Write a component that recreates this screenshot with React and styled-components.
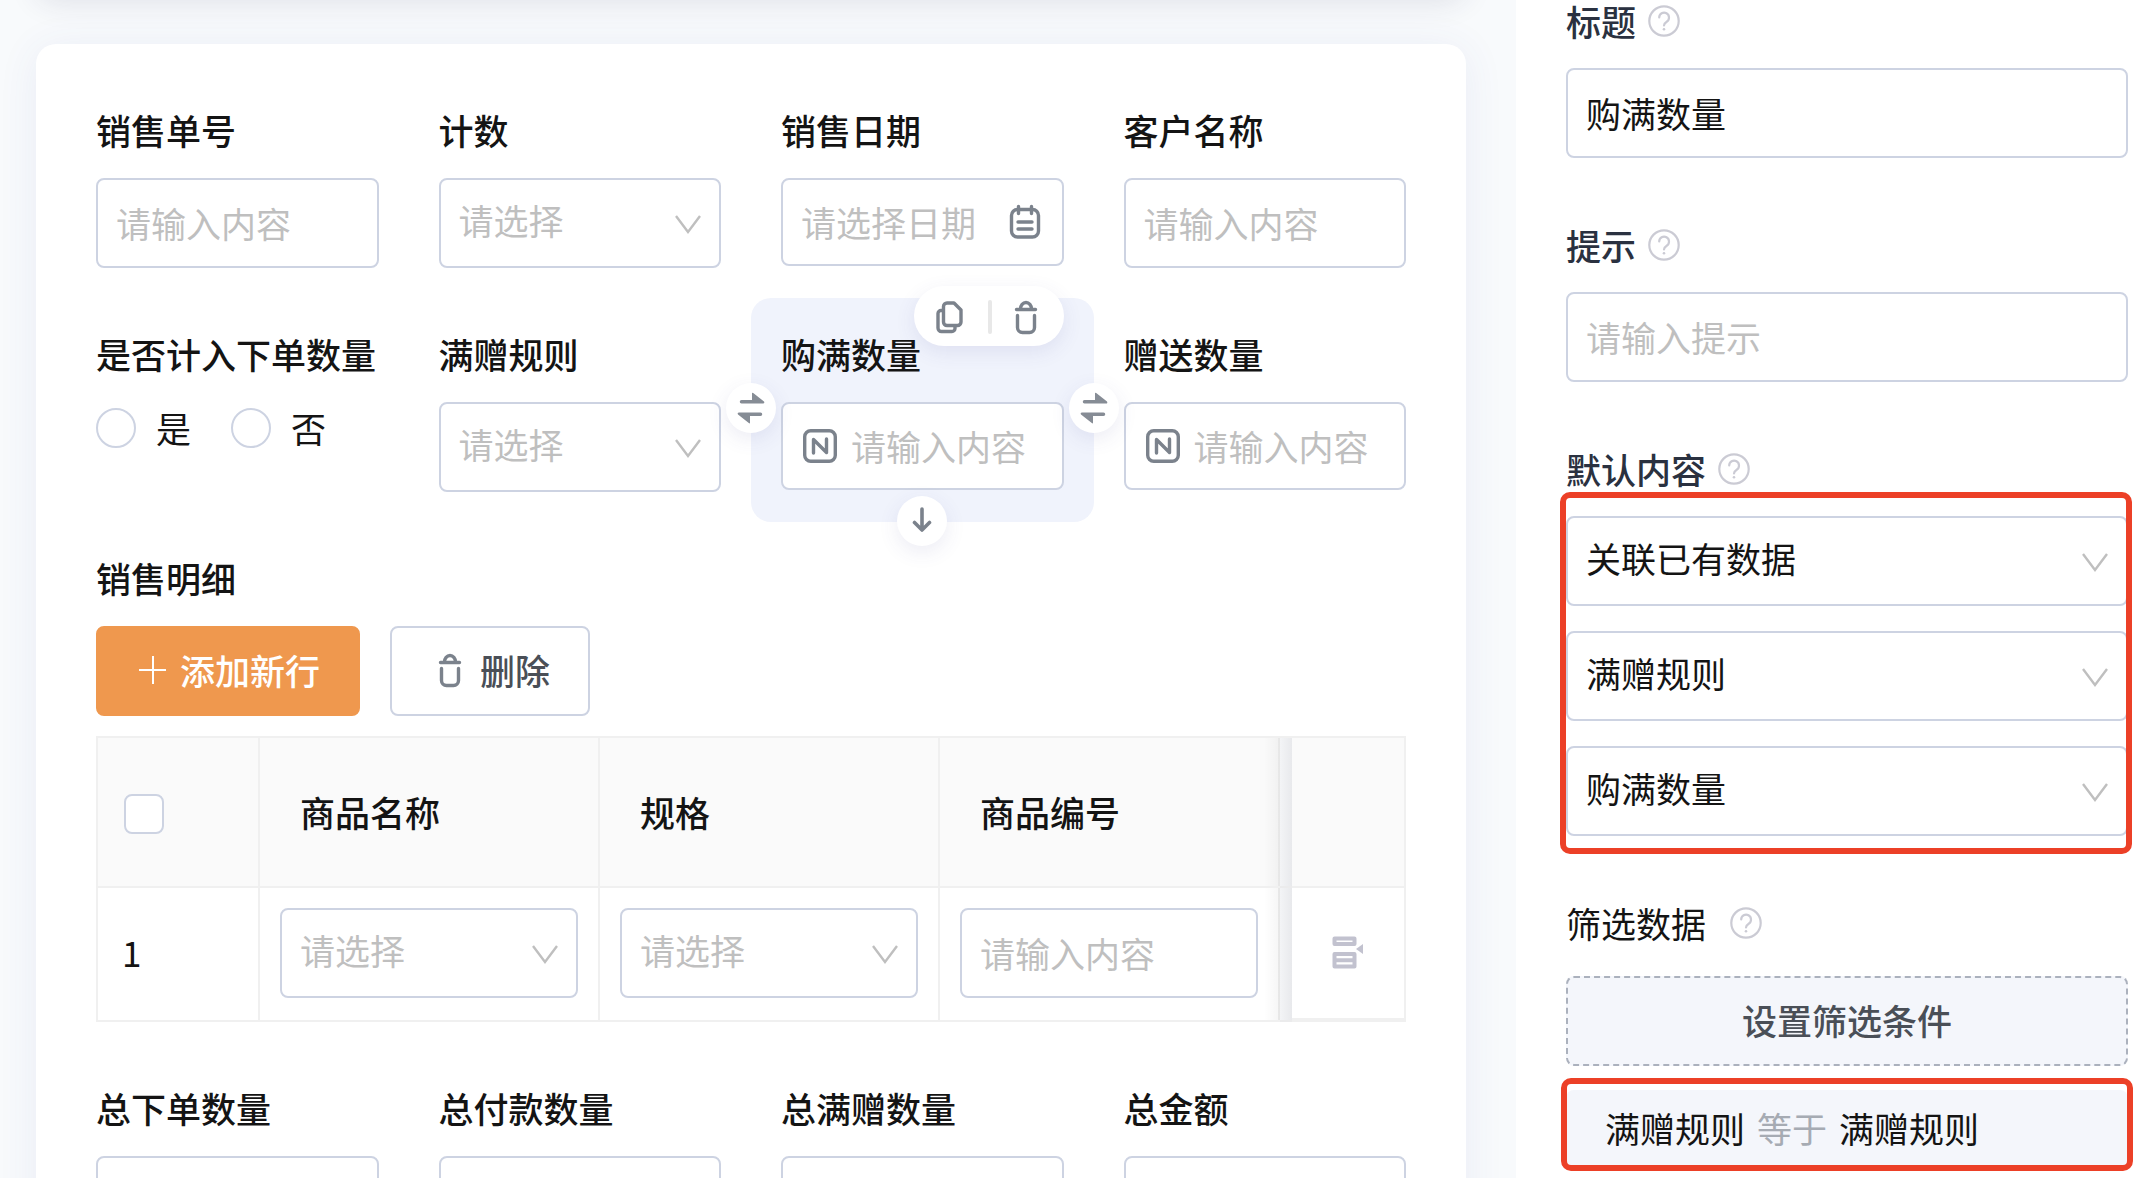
import React, { useId, useState } from "react";
import styled, { createGlobalStyle } from "styled-components";

const GlobalStyle = createGlobalStyle`
    * {
        box-sizing: border-box;
    }

    body {
        margin: 0;
        background: #fff;
        color: #141414;
        font-family: "Noto Sans CJK SC", "Noto Sans", sans-serif;
        font-size: 35px;
        line-height: 44px;
    }

    input,
    select,
    button {
        margin: 0;
        color: inherit;
        font: inherit;
    }
`;

const Page = styled.div`
    display: flex;
    height: 100vh;
    overflow: hidden;
`;

const Designer = styled.main`
    flex: 1;
    min-width: 0;
    padding: 0 50px 0 36px;
    background: #f8fafc;
    overflow: hidden;
`;

// Bottom edge of the toolbar that is scrolled out of view
const ToolbarCard = styled.div`
    height: 80px;
    margin-top: -82px;
    margin-bottom: 46px;
    border-radius: 20px;
    background: #fff;
    box-shadow: 0 4px 30px rgba(40, 40, 80, 0.12);
`;

const FormCard = styled.div`
    padding: 30px;
    border-radius: 20px;
    background: #fff;
    box-shadow: 0 4px 40px rgba(60, 80, 160, 0.08);
`;

const FieldGrid = styled.div`
    display: grid;
    grid-template-columns: repeat(4, minmax(0, 1fr));
`;

const Cell = styled.div`
    position: relative;
    min-height: 224px;
    padding: 30px;
    border-radius: 20px;
    background: ${(props) => (props.$active ? "#f0f3fc" : "transparent")};
`;

const CellLabel = styled.label`
    display: block;
    margin-bottom: 22px;
    font-weight: 500;
    line-height: 52px;
    white-space: nowrap;
`;

const CellTitle = styled.h2`
    margin: 0 0 22px;
    font-size: 35px;
    font-weight: 500;
    line-height: 52px;
`;

const InputBox = styled.div`
    display: flex;
    align-items: center;
    gap: 12px;
    height: ${(props) => (props.$short ? "88px" : "90px")};
    padding: 0 18px;
    border: 2px solid #cdd3e2;
    border-radius: 8px;
    background: #fff;

    svg {
        flex: none;
        margin: 0 2px;
    }
`;

const TextInput = styled.input`
    flex: 1;
    min-width: 0;
    width: 100%;
    height: 100%;
    padding: 0 0 2px;
    border: none;
    outline: none;
    background: transparent;

    &::placeholder {
        color: #bfbfbf;
        opacity: 1;
    }
`;

const SelectBox = styled.div`
    display: grid;
    grid-template-columns: minmax(0, 1fr);
    align-items: center;

    > * {
        grid-area: 1 / 1;
    }

    svg {
        justify-self: end;
        margin-right: 18px;
        pointer-events: none;
    }
`;

const Select = styled.select`
    width: 100%;
    height: 90px;
    padding: 0 50px 6px 18px;
    border: 2px solid #cdd3e2;
    border-radius: 8px;
    outline: none;
    appearance: none;
    background: #fff;
    color: ${(props) => (props.$empty ? "#bfbfbf" : "#141414")};
`;

const RadioRow = styled.div`
    display: flex;
    gap: 40px;
`;

const RadioLabel = styled.label`
    display: flex;
    align-items: center;
    gap: 20px;
    height: 52px;
`;

const Radio = styled.input`
    width: 40px;
    height: 40px;
    border: 2px solid #cdd3e2;
    border-radius: 50%;
    appearance: none;
    background: #fff;

    &:checked {
        border: 12px solid #ef984e;
    }
`;

const Checkbox = styled.input`
    display: block;
    width: 40px;
    height: 40px;
    margin-top: 4px;
    border: 2px solid #cdd3e2;
    border-radius: 8px;
    appearance: none;
    background: #fff;

    &:checked {
        background: #ef984e;
    }
`;

const FloatTools = styled.div`
    position: absolute;
    top: -12px;
    right: 30px;
    z-index: 2;
    display: flex;
    align-items: center;
    gap: 22px;
    width: 150px;
    height: 60px;
    padding: 2px 20px 0;
    border-radius: 30px;
    background: #fff;
    box-shadow: 0 6px 20px rgba(70, 70, 150, 0.1);
`;

const ToolDivider = styled.span`
    width: 4px;
    height: 34px;
    border-radius: 2px;
    background: #e8e8e8;
`;

const IconButton = styled.button`
    display: flex;
    padding: 0;
    border: none;
    background: none;
    cursor: pointer;
`;

const RoundButton = styled.button`
    position: absolute;
    z-index: 2;
    display: flex;
    align-items: center;
    justify-content: center;
    width: 50px;
    height: 50px;
    padding: 0;
    border: none;
    border-radius: 50%;
    background: #fff;
    box-shadow: 0 6px 20px rgba(70, 70, 150, 0.1);
    cursor: pointer;
    ${(props) => props.$side === "left" && "left: -25px; top: 85px;"}
    ${(props) => props.$side === "right" && "right: -25px; top: 85px;"}
    ${(props) =>
        props.$side === "bottom" && "left: calc(50% - 25px); bottom: -24px;"}
`;

const Detail = styled.section`
    padding: 30px;
`;

const ButtonRow = styled.div`
    display: flex;
    gap: 30px;
    margin-bottom: 20px;
`;

const Button = styled.button`
    display: flex;
    align-items: center;
    gap: ${(props) => (props.$primary ? "14px" : "18px")};
    height: 90px;
    padding: 0 38px 2px ${(props) => (props.$primary ? "40px" : "46px")};
    border: 2px solid ${(props) => (props.$primary ? "#ef984e" : "#cdd3e2")};
    border-radius: 8px;
    background: ${(props) => (props.$primary ? "#ef984e" : "#fff")};
    color: ${(props) => (props.$primary ? "#fff" : "#4a4f57")};
    font-weight: 500;
    cursor: pointer;
`;

const Table = styled.table`
    width: 100%;
    border-top: 2px solid #f0f0f0;
    border-left: 2px solid #f0f0f0;
    border-collapse: separate;
    border-spacing: 0;
    table-layout: fixed;
`;

const Th = styled.th`
    height: 150px;
    padding: 0 ${(props) => (props.$check ? "26px" : "40px")};
    border-right: 2px solid #f0f0f0;
    border-bottom: 2px solid #f0f0f0;
    background: #fafafa;
    font-weight: 500;
    text-align: left;
`;

const Td = styled.td`
    height: 134px;
    padding: ${(props) => (props.$text ? "0 24px 4px" : "20px 20px 22px")};
    border-right: 2px solid #f0f0f0;
    border-bottom: ${(props) => (props.$last ? "4px" : "2px")} solid #f0f0f0;
`;

// Shadow cast by the fixed last column
const Gutter = styled.td`
    position: relative;
    padding: 0;
    border-bottom: 2px solid #ebebec;
    background: linear-gradient(to right, #f3f4f6, #e8e9ec);

    &::before {
        content: "";
        position: absolute;
        top: 0;
        bottom: 0;
        right: 100%;
        width: 16px;
        background: linear-gradient(
            to right,
            rgba(0, 0, 0, 0),
            rgba(0, 0, 0, 0.04)
        );
    }
`;

const Col = styled.col`
    width: ${(props) => props.$width || "auto"};
`;

const InsertCell = styled.div`
    display: flex;
    justify-content: center;
`;

const Settings = styled.aside`
    flex: none;
    width: 622px;
    padding: 0 10px 0 50px;
    background: #fff;
`;

const Setting = styled.section`
    margin-bottom: 66px;
`;

const SettingHead = styled.div`
    display: flex;
    align-items: center;
    gap: ${(props) => (props.$plain ? "24px" : "12px")};
    margin-bottom: ${(props) => (props.$plain ? "32px" : "26px")};
    color: ${(props) => (props.$plain ? "#141414" : "#2a3140")};
    font-weight: ${(props) => (props.$plain ? 400 : 500)};
    line-height: 42px;
`;

const Marked = styled.div`
    position: relative;
    display: flex;
    flex-direction: column;
    gap: 25px;

    &::after {
        content: "";
        position: absolute;
        inset: ${(props) => props.$inset};
        border: 6px solid #ec4027;
        border-radius: 10px;
        pointer-events: none;
    }
`;

const FilterButton = styled.button`
    display: block;
    width: 100%;
    height: 90px;
    margin-bottom: 24px;
    padding: 0 0 2px;
    border: 2px dashed #abb1bd;
    border-radius: 8px;
    background: #f4f6fb;
    color: #4a4f57;
    font-weight: 500;
    cursor: pointer;
`;

const Condition = styled.div`
    display: flex;
    align-items: center;
    gap: 12px;
    height: 80px;
    padding: 0 39px 4px;
    border-radius: 8px;
    background: #f4f6fb;
`;

const Operator = styled.span`
    color: #a6abb3;
`;

const ChevronIcon = () => (
    <svg width="30" height="30" viewBox="0 0 30 30" fill="none">
        <path d="M3 8 15 24 27 8" stroke="#bfbfbf" strokeWidth="2.4" />
    </svg>
);

const CalendarIcon = () => (
    <svg
        width="34"
        height="36"
        viewBox="0 0 34 36"
        fill="none"
        stroke="#7b828c"
        strokeWidth="3.4"
        strokeLinecap="round"
    >
        <rect x="3.5" y="5.5" width="27" height="27.5" rx="6" />
        <path d="M10.5 2.5v7M23.5 2.5v7M10 18h14M10 25h14" />
    </svg>
);

const NumberIcon = () => (
    <svg
        width="34"
        height="34"
        viewBox="0 0 34 34"
        fill="none"
        stroke="#7b828c"
        strokeWidth="3.4"
        strokeLinecap="round"
        strokeLinejoin="round"
    >
        <rect x="1.7" y="1.7" width="30.6" height="30.6" rx="6" />
        <path d="M10.5 24V10.5L23.5 23.5V10" />
    </svg>
);

const CopyIcon = () => (
    <svg
        width="32"
        height="36"
        viewBox="0 0 32 36"
        fill="none"
        stroke="#7b828c"
        strokeWidth="3.4"
        strokeLinejoin="round"
    >
        <path d="M13 4h7l7 7v12a3.500 3.500 0 0 1-3.500 3.500H13A3.500 3.500 0 0 1 9.500 23V7.500A3.500 3.500 0 0 1 13 4Z" />
        <path d="M9.500 11.500H7a3 3 0 0 0-3 3v14.500a3.500 3.500 0 0 0 3.500 3.500H18a3 3 0 0 0 3-3v-3" />
    </svg>
);

const TrashIcon = () => (
    <svg
        width="24"
        height="36"
        viewBox="0 0 24 36"
        fill="none"
        stroke="#7b828c"
        strokeWidth="3.4"
        strokeLinecap="round"
    >
        <path d="M2.500 10.500h19M6.500 10a5.500 6.500 0 0 1 11 0" />
        <path d="M3.500 16.500v12a5 5 0 0 0 5 5h7a5 5 0 0 0 5-5v-12" />
    </svg>
);

const SwapIcon = () => (
    <svg width="28" height="32" viewBox="0 0 28 32" fill="#868c95">
        <path d="M4.500 8H15V1.500Q15 .2 16.200 1L27 9.500Q28 11.500 26 11.500H4.500a1.750 1.750 0 0 1 0-3.500Z" />
        <path d="M23.500 24H13v6.500Q13 32 11.800 31L1 22.500Q0 20.500 2 20.500h21.500a1.750 1.750 0 0 1 0 3.500Z" />
    </svg>
);

const DownIcon = () => (
    <svg
        width="22"
        height="28"
        viewBox="0 0 22 28"
        fill="none"
        stroke="#7b828c"
        strokeWidth="3.6"
        strokeLinecap="round"
        strokeLinejoin="round"
    >
        <path d="M11 2v20M3.500 15.500 11 23l7.500-7.500" />
    </svg>
);

const PlusIcon = () => (
    <svg width="28" height="28" viewBox="0 0 28 28" fill="none">
        <path d="M15 0v28M1 14h27" stroke="#fff" strokeWidth="2" />
    </svg>
);

const InsertRowIcon = () => (
    <svg
        width="32"
        height="34"
        viewBox="0 0 32 34"
        fill="none"
        stroke="#c2c2cf"
        strokeWidth="4"
        strokeLinejoin="round"
    >
        <path d="M2.500 3.500h20v5.500h-20zM2.500 19h20v12.500h-20zM3 25.200h19" />
        <path d="M31 9v10l-7-5z" fill="#c2c2cf" stroke="none" />
    </svg>
);

const HelpIcon = () => (
    <svg
        width="32"
        height="32"
        viewBox="0 0 32 32"
        fill="none"
        stroke="#cbcbd4"
        strokeWidth="2.2"
        strokeLinecap="round"
    >
        <circle cx="16" cy="16" r="14.700" />
        <path d="M11.200 12.500a4.900 4.900 0 1 1 7.500 4.200c-1.700 1.100-2.700 2-2.700 3.800" />
        <circle cx="16" cy="24.200" r="1.300" fill="#cbcbd4" stroke="none" />
    </svg>
);

function SelectField({ id, label, value }) {
    return (
        <SelectBox>
            <Select id={id} aria-label={label} $empty={!value}>
                <option>{value || "请选择"}</option>
            </Select>
            <ChevronIcon />
        </SelectBox>
    );
}

function Field({ label, type = "text", active, children }) {
    const id = useId();

    return (
        <Cell $active={active}>
            <CellLabel htmlFor={id}>{label}</CellLabel>
            {type === "select" && <SelectField id={id} />}
            {type === "text" && (
                <InputBox>
                    <TextInput id={id} placeholder="请输入内容" />
                </InputBox>
            )}
            {type === "date" && (
                <InputBox $short>
                    <TextInput id={id} placeholder="请选择日期" />
                    <CalendarIcon />
                </InputBox>
            )}
            {type === "number" && (
                <InputBox $short>
                    <NumberIcon />
                    <TextInput id={id} placeholder="请输入内容" />
                </InputBox>
            )}
            {children}
        </Cell>
    );
}

function RadioField({ label, options }) {
    const id = useId();

    return (
        <Cell role="radiogroup" aria-labelledby={id}>
            <CellLabel as="div" id={id}>
                {label}
            </CellLabel>
            <RadioRow>
                {options.map((option) => (
                    <RadioLabel key={option}>
                        <Radio type="radio" name={id} value={option} />
                        {option}
                    </RadioLabel>
                ))}
            </RadioRow>
        </Cell>
    );
}

function DetailTable() {
    return (
        <Table>
            <colgroup>
                <Col $width="162px" />
                <Col />
                <Col />
                <Col />
                <Col $width="12px" />
                <Col $width="114px" />
            </colgroup>
            <thead>
                <tr>
                    <Th $check>
                        <Checkbox type="checkbox" aria-label="全选" />
                    </Th>
                    <Th>商品名称</Th>
                    <Th>规格</Th>
                    <Th>商品编号</Th>
                    <Gutter />
                    <Th />
                </tr>
            </thead>
            <tbody>
                <tr>
                    <Td $text>1</Td>
                    <Td>
                        <SelectField label="商品名称" />
                    </Td>
                    <Td>
                        <SelectField label="规格" />
                    </Td>
                    <Td>
                        <InputBox>
                            <TextInput
                                aria-label="商品编号"
                                placeholder="请输入内容"
                            />
                        </InputBox>
                    </Td>
                    <Gutter />
                    <Td $last>
                        <InsertCell>
                            <IconButton type="button" aria-label="插入行">
                                <InsertRowIcon />
                            </IconButton>
                        </InsertCell>
                    </Td>
                </tr>
            </tbody>
        </Table>
    );
}

export default function App() {
    const [title, setTitle] = useState("购满数量");

    return (
        <>
            <GlobalStyle />
            <Page>
                <Designer>
                    <ToolbarCard />
                    <FormCard>
                        <FieldGrid>
                            <Field label="销售单号" />
                            <Field label="计数" type="select" />
                            <Field label="销售日期" type="date" />
                            <Field label="客户名称" />
                            <RadioField
                                label="是否计入下单数量"
                                options={["是", "否"]}
                            />
                            <Field label="满赠规则" type="select" />
                            <Field label="购满数量" type="number" active>
                                <FloatTools>
                                    <IconButton type="button" aria-label="复制">
                                        <CopyIcon />
                                    </IconButton>
                                    <ToolDivider />
                                    <IconButton type="button" aria-label="删除">
                                        <TrashIcon />
                                    </IconButton>
                                </FloatTools>
                                <RoundButton $side="left" aria-label="向左交换">
                                    <SwapIcon />
                                </RoundButton>
                                <RoundButton
                                    $side="right"
                                    aria-label="向右交换"
                                >
                                    <SwapIcon />
                                </RoundButton>
                                <RoundButton $side="bottom" aria-label="下移">
                                    <DownIcon />
                                </RoundButton>
                            </Field>
                            <Field label="赠送数量" type="number" />
                        </FieldGrid>
                        <Detail>
                            <CellTitle>销售明细</CellTitle>
                            <ButtonRow>
                                <Button type="button" $primary>
                                    <PlusIcon />
                                    添加新行
                                </Button>
                                <Button type="button">
                                    <TrashIcon />
                                    删除
                                </Button>
                            </ButtonRow>
                            <DetailTable />
                        </Detail>
                        <FieldGrid>
                            <Field label="总下单数量" />
                            <Field label="总付款数量" />
                            <Field label="总满赠数量" />
                            <Field label="总金额" />
                        </FieldGrid>
                    </FormCard>
                </Designer>
                <Settings>
                    <Setting>
                        <SettingHead>
                            <label htmlFor="title">标题</label>
                            <HelpIcon />
                        </SettingHead>
                        <InputBox>
                            <TextInput
                                id="title"
                                value={title}
                                onChange={(e) => setTitle(e.target.value)}
                            />
                        </InputBox>
                    </Setting>
                    <Setting>
                        <SettingHead>
                            <label htmlFor="tip">提示</label>
                            <HelpIcon />
                        </SettingHead>
                        <InputBox>
                            <TextInput id="tip" placeholder="请输入提示" />
                        </InputBox>
                    </Setting>
                    <Setting>
                        <SettingHead>
                            <label htmlFor="source">默认内容</label>
                            <HelpIcon />
                        </SettingHead>
                        <Marked $inset="-24px -4px -18px -6px">
                            <SelectField id="source" value="关联已有数据" />
                            <SelectField label="关联表" value="满赠规则" />
                            <SelectField label="关联字段" value="购满数量" />
                        </Marked>
                    </Setting>
                    <Setting>
                        <SettingHead $plain>
                            筛选数据
                            <HelpIcon />
                        </SettingHead>
                        <FilterButton type="button">设置筛选条件</FilterButton>
                        <Marked $inset="-12px -5px -1px -5px">
                            <Condition>
                                <span>满赠规则</span>
                                <Operator>等于</Operator>
                                <span>满赠规则</span>
                            </Condition>
                        </Marked>
                    </Setting>
                </Settings>
            </Page>
        </>
    );
}
